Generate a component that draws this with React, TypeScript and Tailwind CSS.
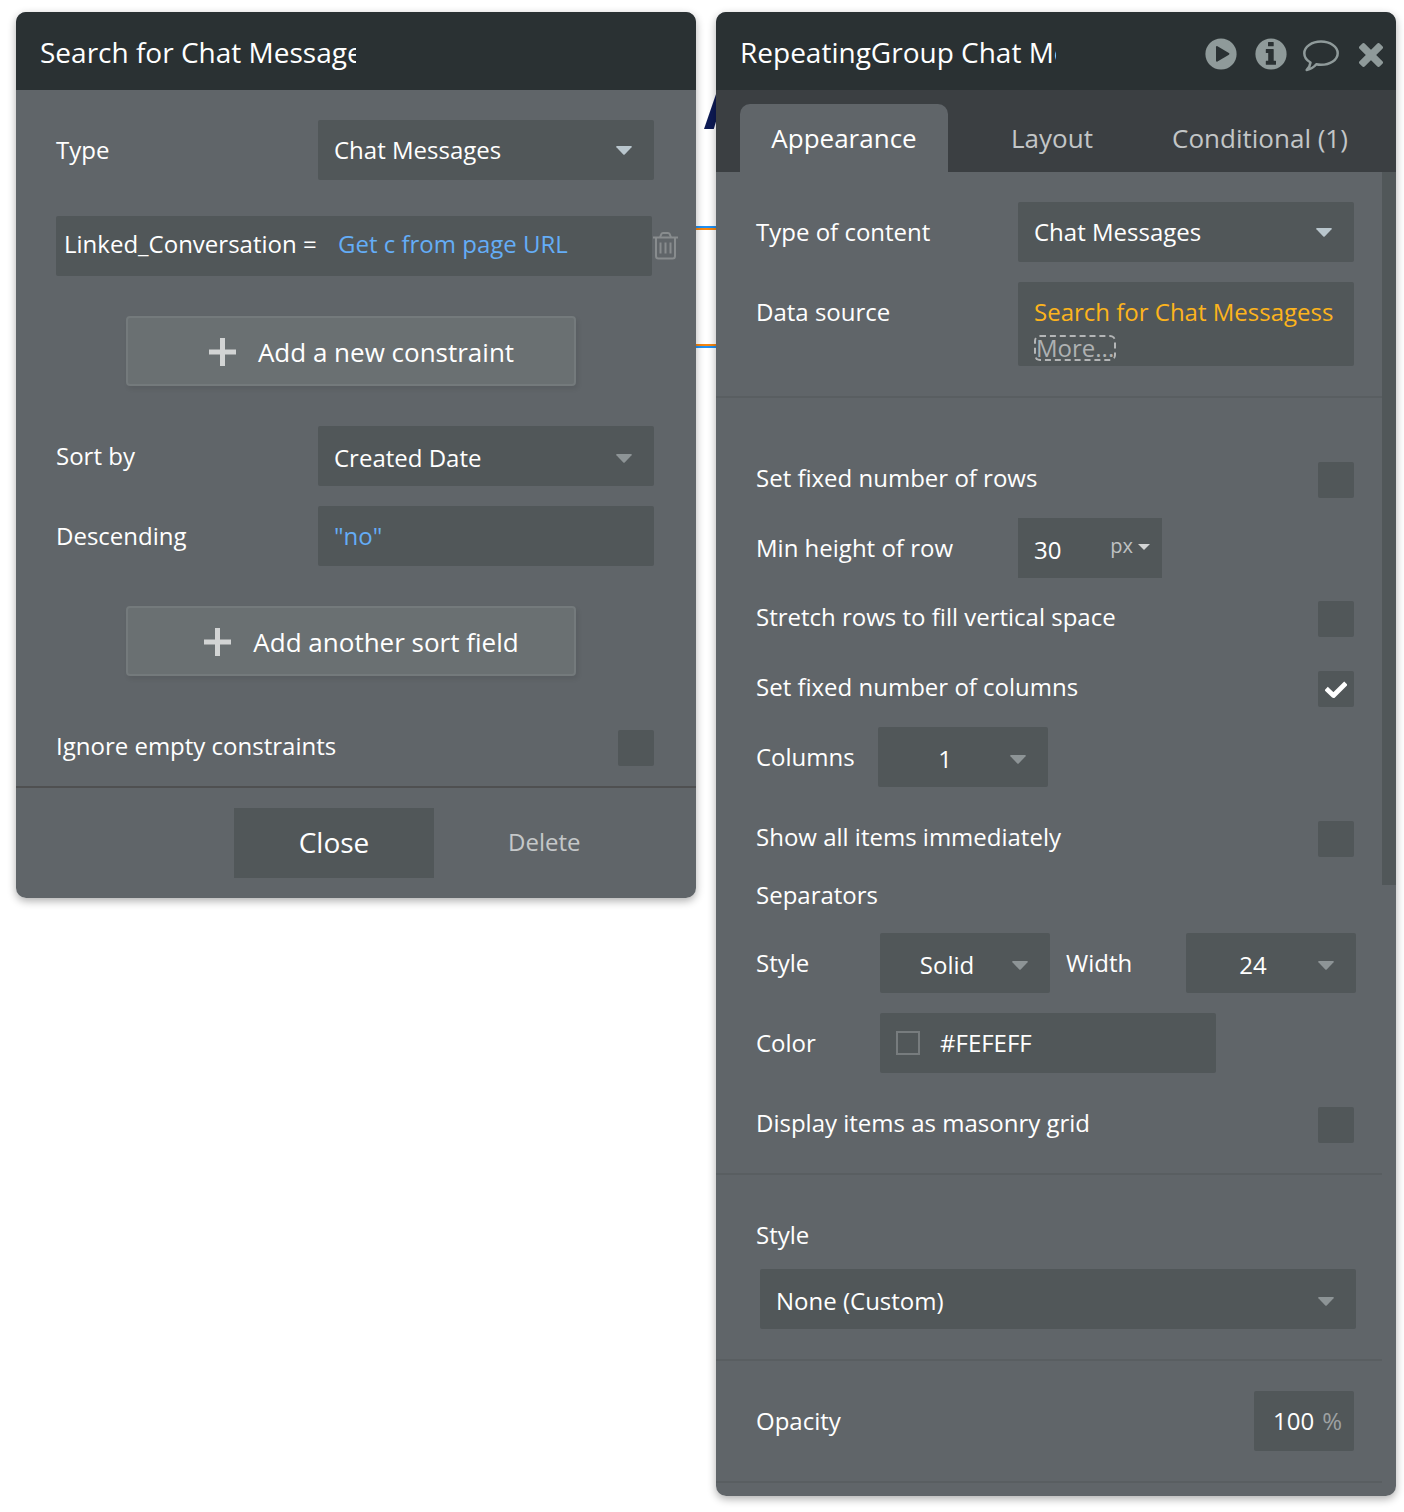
import type { ReactNode } from "react";

type CaretProps = {
  className?: string;
};

const Caret = ({ className = "text-[#8d9496]" }: CaretProps) => (
  <svg
    width="16"
    height="9"
    viewBox="0 0 16 9"
    className={`shrink-0 ${className}`}
  >
    <path
      d="M1 0h14q1.3.3.6 1.3L8.7 8.5q-.7.6-1.4 0L.4 1.3Q-.3.3 1 0Z"
      fill="currentColor"
    />
  </svg>
);

const PlusIcon = () => (
  <svg width="27" height="28" viewBox="0 0 27 28" className="shrink-0">
    <path d="M11 0h5v11.5h11v5H16V28h-5V16.5H0v-5h11z" fill="#d2d4d4" />
  </svg>
);

const TrashIcon = () => (
  <svg
    width="26"
    height="28"
    viewBox="0 0 26 28"
    fill="none"
    stroke="#888c8e"
    strokeWidth="2"
    className="ml-px shrink-0"
  >
    <path d="M0 5.5h25" />
    <path d="M7 5.500 8.300 2.200Q8.800 1 10 1h5q1.200 0 1.700 1.200L18 5.500" />
    <path d="M3 5.500V24q0 2.500 2.400 2.500h14.200q2.400 0 2.400-2.500V5.500" />
    <path d="M7.500 10.500v11M12.500 10.500v11M17.500 10.500v11" />
  </svg>
);

const PlayIcon = () => (
  <svg width="32" height="32" viewBox="0 0 32 32">
    <circle cx="16" cy="16" r="15.600" fill="#8f9a9a" />
    <path
      d="M11 9.200q0-1.700 1.500-.9l11.400 6.700q1.200.8 0 1.700l-11.400 6.700q-1.500.8-1.500-.9z"
      fill="#2a3133"
    />
  </svg>
);

const InfoIcon = () => (
  <svg width="32" height="32" viewBox="0 0 32 32">
    <circle cx="16" cy="16" r="15.600" fill="#8f9a9a" />
    <path
      d="M13.500 4h4.700q.5 0 .5.500v3.300q0 .5-.5.500h-4.700q-.5 0-.5-.5V4.500q0-.5.5-.5zM11.300 11h6.900q.5 0 .5.500v11.200h1.800q.5 0 .5.500v3q0 .5-.5.500h-9.200q-.5 0-.5-.5v-3q0-.5.5-.5h1.900v-7.700h-1.900q-.5 0-.5-.5v-3q0-.5.5-.5z"
      fill="#2a3133"
    />
  </svg>
);

const CommentIcon = () => (
  <svg width="36" height="32" viewBox="0 0 36 32">
    <path
      d="M18 1.500c9.200 0 16.700 5.200 16.700 11.700S27.200 24.800 18 24.800c-1.700 0-3.200-.1-4.700-.5-2.500 3-5.800 5-9.600 5.700 2.200-2.200 3.500-4.600 3.800-7.500-3.800-2.200-6.200-5.500-6.200-9.300C1.300 6.700 8.800 1.500 18 1.500Z"
      fill="none"
      stroke="#8f9a9a"
      strokeWidth="2.500"
      strokeLinejoin="round"
    />
  </svg>
);

const CloseIcon = () => (
  <svg width="24" height="24" viewBox="0 0 24 24">
    <g fill="#8f9a9a">
      <rect
        x="-2.200"
        y="8.400"
        width="28.400"
        height="7.200"
        rx="1.600"
        transform="rotate(45 12 12)"
      />
      <rect
        x="-2.200"
        y="8.400"
        width="28.400"
        height="7.200"
        rx="1.600"
        transform="rotate(-45 12 12)"
      />
    </g>
  </svg>
);

const CheckBox = ({ checked = false }: { checked?: boolean }) => (
  <div className="flex size-9 shrink-0 items-center justify-center rounded-xs bg-[#515759]">
    {checked && (
      <svg width="22" height="18" viewBox="0 0 22 18" className="mt-px">
        <path
          d="m2.900 9.200 5.600 5.300L19.200 3.800"
          fill="none"
          stroke="white"
          strokeWidth="4.800"
          strokeLinecap="square"
          strokeLinejoin="round"
        />
      </svg>
    )}
  </div>
);

type CheckRowProps = {
  label: string;
  checked?: boolean;
  className?: string;
};

const CheckRow = ({ label, checked, className = "" }: CheckRowProps) => (
  <div className={`flex h-9 items-center justify-between ${className}`}>
    <span className="pb-1">{label}</span>
    <CheckBox checked={checked} />
  </div>
);

// Wide dropdown, text on the left
const Select = ({ value, bright }: { value: string; bright?: boolean }) => (
  <div className="flex h-15 w-[336px] items-center justify-between rounded-xs bg-[#515759] pr-[22px] pl-4">
    <span className={bright ? "" : "pt-1"}>{value}</span>
    <Caret
      className={bright ? "mt-px text-[#b9c6cd]" : "mt-[5px] text-[#8d9496]"}
    />
  </div>
);

// Narrow dropdown, text in the middle
const SmallSelect = ({ value }: { value: string }) => (
  <div className="flex h-15 w-[170px] items-center rounded-xs bg-[#515759] pr-[22px] pl-0.5">
    <span className="flex-1 pt-1 text-center">{value}</span>
    <Caret className="mt-[5px] text-[#8d9496]" />
  </div>
);

const AddButton = ({ children }: { children: ReactNode }) => (
  <button
    type="button"
    className="mx-auto flex h-[70px] w-[450px] items-center justify-center gap-[22px] rounded-sm border-2 border-[#747a7c] bg-[#6a7072] pt-0.5 pl-[21px] text-[26px] shadow-[2px_3px_5px_rgba(0,0,0,0.08)]"
  >
    <PlusIcon />
    <span className="pt-px">{children}</span>
  </button>
);

const Divider = ({ className = "" }: { className?: string }) => (
  <div className={`-ml-10 h-0.5 w-[666px] bg-[#595e61] ${className}`} />
);

const SearchPanel = () => (
  <div className="relative flex h-[886px] w-[680px] flex-col overflow-hidden rounded-[10px] bg-[#606569]">
    <div className="flex h-[78px] items-center bg-[#2a3133] px-6">
      <div className="w-[316px] overflow-hidden pt-[3px] text-[28px] whitespace-nowrap">
        Search for Chat Messages
      </div>
    </div>

    <div className="h-[696px] px-10 pt-[30px]">
      <div className="flex h-15 w-[598px] items-center justify-between">
        <span>Type</span>
        <Select value="Chat Messages" bright />
      </div>

      {/* Constraint */}
      <div className="mt-9 -mr-10 flex items-center">
        <div className="flex h-15 w-[596px] items-center rounded-xs bg-[#515759] pb-1 pl-2">
          <span className="w-[274px]">Linked_Conversation =</span>
          <span className="text-[#64adf7]">Get c from page URL</span>
        </div>
        <TrashIcon />
      </div>

      <div className="mt-10 pr-[10px]">
        <AddButton>Add a new constraint</AddButton>
      </div>

      <div className="mt-10 flex h-15 w-[598px] items-center justify-between">
        <span>Sort by</span>
        <Select value="Created Date" />
      </div>
      <div className="mt-5 flex h-15 w-[598px] items-center justify-between">
        <span>Descending</span>
        <div className="flex h-15 w-[336px] items-center rounded-xs bg-[#515759] px-4 text-[#64adf7]">
          "no"
        </div>
      </div>

      <div className="mt-10 pr-[10px]">
        <AddButton>Add another sort field</AddButton>
      </div>

      <CheckRow
        label="Ignore empty constraints"
        className="mt-[54px] w-[598px]"
      />
    </div>

    {/* Footer */}
    <div className="flex items-center border-t-2 border-[#4f5051] pt-5 pl-[218px]">
      <button type="button" className="h-[70px] w-[200px] bg-[#515759] text-[28px]">
        Close
      </button>
      <button type="button" className="ml-[74px] pb-0.5 text-[#c5c8c9]">
        Delete
      </button>
    </div>
  </div>
);

const GroupPanel = () => (
  <div className="relative flex h-[1484px] w-[680px] flex-col overflow-hidden rounded-[10px] bg-[#606569]">
    <div className="flex h-[78px] items-center justify-between bg-[#2a3133] pr-[13px] pl-6">
      <div className="w-[316px] overflow-hidden pt-[3px] text-[28px] whitespace-nowrap">
        RepeatingGroup Chat Messages
      </div>
      <div className="flex items-center pt-1.5">
        <PlayIcon />
        <div className="ml-[18px]">
          <InfoIcon />
        </div>
        <div className="mt-1 ml-4">
          <CommentIcon />
        </div>
        <div className="mt-0.5 ml-5">
          <CloseIcon />
        </div>
      </div>
    </div>

    {/* Tabs */}
    <div className="flex h-[82px] bg-[#3b3f42] px-6 pt-3.5 text-[26px] text-[#c3c6c7]">
      <div className="flex w-[208px] items-center justify-center rounded-t-[10px] bg-[#606569] text-white">
        Appearance
      </div>
      <div className="flex w-[208px] items-center justify-center">Layout</div>
      <div className="flex w-[208px] items-center justify-center">
        Conditional (1)
      </div>
    </div>

    <div className="flex flex-1">
      <div className="w-[666px] pt-[30px] pl-10">
        <div className="flex h-15 w-[598px] items-center justify-between">
          <span>Type of content</span>
          <Select value="Chat Messages" bright />
        </div>
        <div className="mt-5 flex w-[598px] justify-between">
          <span className="leading-[60px]">Data source</span>
          <div className="h-[84px] w-[336px] rounded-xs bg-[#515759] pt-3 pl-4">
            <div className="leading-9 whitespace-nowrap text-[#fdb41c]">
              Search for Chat Messagess
            </div>
            <div className="mt-[5px] h-[26px] w-[82px] rounded-md border-2 border-dashed border-[#b4b6b7] leading-[22px] whitespace-nowrap text-[#aeb1b2]">
              More...
            </div>
          </div>
        </div>

        <Divider className="mt-[30px]" />

        <CheckRow
          label="Set fixed number of rows"
          className="mt-16 w-[598px]"
        />
        <div className="mt-5 flex h-15 items-center">
          <span className="w-[262px]">Min height of row</span>
          <div className="flex h-15 w-36 items-center justify-between bg-[#515759] pr-3 pl-4">
            <span className="pt-1">30</span>
            <span className="flex items-center gap-[5px] pb-1 text-xl text-[#bfc2c3]">
              px
              <svg width="12" height="6" viewBox="0 0 12 6" className="mt-0.5">
                <path d="M0 0h12L6 6z" fill="#d3d5d5" />
              </svg>
            </span>
          </div>
        </div>
        <CheckRow
          label="Stretch rows to fill vertical space"
          className="mt-[23px] w-[598px]"
        />
        <CheckRow
          label="Set fixed number of columns"
          checked
          className="mt-[34px] w-[598px]"
        />
        <div className="mt-5 flex h-15 items-center">
          <span className="w-[122px]">Columns</span>
          <SmallSelect value="1" />
        </div>
        <CheckRow
          label="Show all items immediately"
          className="mt-[34px] w-[598px]"
        />

        {/* Separators */}
        <div className="mt-5 leading-9">Separators</div>
        <div className="mt-5 flex h-15 items-center">
          <span className="w-[124px]">Style</span>
          <SmallSelect value="Solid" />
          <span className="ml-4 w-[120px]">Width</span>
          <SmallSelect value="24" />
        </div>
        <div className="mt-5 flex h-15 items-center">
          <span className="w-[124px]">Color</span>
          <div className="flex h-15 w-[336px] items-center gap-5 rounded-xs bg-[#515759] pl-4">
            <div className="size-6 border-2 border-[#777c7e]" />
            #FEFEFF
          </div>
        </div>
        <CheckRow
          label="Display items as masonry grid"
          className="mt-[34px] w-[598px]"
        />

        <Divider className="mt-[30px]" />

        <div className="mt-[42px] leading-9">Style</div>
        <div className="mt-4 ml-1 flex h-15 w-[596px] items-center justify-between rounded-xs bg-[#515759] pr-[22px] pl-4">
          <span className="pt-1">None (Custom)</span>
          <Caret className="mt-[5px] text-[#8d9496]" />
        </div>

        <Divider className="mt-[30px]" />

        <div className="mt-[30px] flex h-15 w-[598px] items-center justify-between">
          <span>Opacity</span>
          <div className="flex h-15 w-[100px] items-center justify-between rounded-xs bg-[#515759] pr-3 pl-[19px]">
            <span>100</span>
            <span className="text-[#9da1a2]">%</span>
          </div>
        </div>

        <Divider className="mt-[30px]" />
      </div>
      {/* Scrollbar */}
      <div className="h-[713px] w-3.5 bg-[#515759]" />
    </div>
  </div>
);

const App = () => {
  return (
    <div className="relative flex h-[1512px] w-[1404px] items-start gap-5 overflow-hidden bg-white px-4 pt-3 font-['Open_Sans',sans-serif] text-2xl text-white">
      {/* Canvas behind the panels */}
      <div className="absolute top-[226px] left-[600px] h-[122px] w-[220px] border-2 border-[#1f90f4]">
        <div className="h-full border-2 border-[#f78610]" />
      </div>
      <div className="absolute top-[76px] left-[704px] text-[60px] leading-[60px] font-bold text-[#0d1a54]">
        A
      </div>

      <div className="relative rounded-[10px] shadow-[0_3px_9px_rgba(0,0,0,0.32)]">
        <SearchPanel />
      </div>
      <div className="relative rounded-[10px] shadow-[0_3px_9px_rgba(0,0,0,0.32)]">
        <GroupPanel />
      </div>
    </div>
  );
};

export default App;
